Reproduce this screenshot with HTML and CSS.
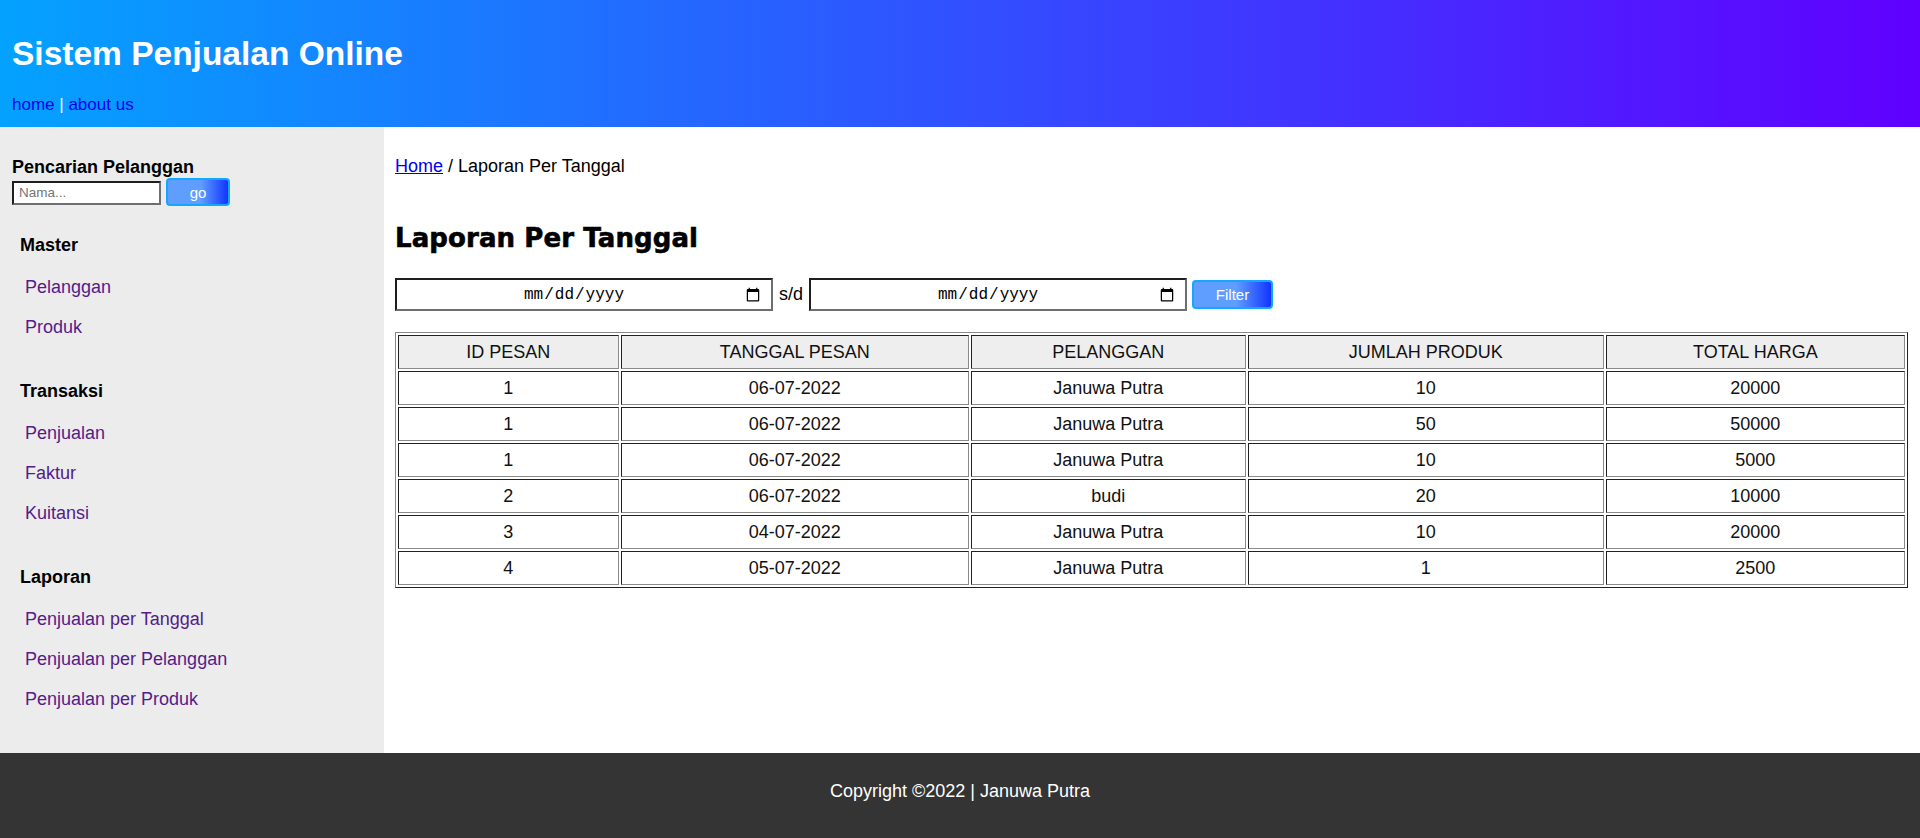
FILE: index.html
```html
<!DOCTYPE html>
<html lang="id">
<head>
<meta charset="utf-8">
<title>Laporan Per Tanggal</title>
<link rel="stylesheet" href="styles.css">
</head>
<body>
<header class="site-header">
  <h1 class="site-title">Sistem Penjualan Online</h1>
  <nav class="top-nav"><a href="#">home</a> | <a href="#">about us</a></nav>
</header>
<div class="layout">
  <aside class="sidebar">
    <div class="search-title">Pencarian Pelanggan</div>
    <form class="search-form">
      <input class="search-input" type="text" placeholder="Nama...">
      <button class="btn btn-go" type="button">go</button>
    </form>
    <section class="menu-section menu-first">
      <h3 class="menu-heading">Master</h3>
      <ul class="menu-list">
        <li><a href="#">Pelanggan</a></li>
        <li><a href="#">Produk</a></li>
      </ul>
    </section>
    <section class="menu-section">
      <h3 class="menu-heading">Transaksi</h3>
      <ul class="menu-list">
        <li><a href="#">Penjualan</a></li>
        <li><a href="#">Faktur</a></li>
        <li><a href="#">Kuitansi</a></li>
      </ul>
    </section>
    <section class="menu-section">
      <h3 class="menu-heading">Laporan</h3>
      <ul class="menu-list">
        <li><a href="#">Penjualan per Tanggal</a></li>
        <li><a href="#">Penjualan per Pelanggan</a></li>
        <li><a href="#">Penjualan per Produk</a></li>
      </ul>
    </section>
  </aside>
  <main class="content">
    <div class="breadcrumb"><a href="#">Home</a> / Laporan Per Tanggal</div>
    <h2 class="page-title">Laporan Per Tanggal</h2>
    <form class="filter-form">
      <input class="date-input" type="date">
      <span class="sd">s/d</span>
      <input class="date-input" type="date">
      <button class="btn btn-filter" type="button">Filter</button>
    </form>
    <table class="report">
      <thead>
        <tr><th>ID PESAN</th><th>TANGGAL PESAN</th><th>PELANGGAN</th><th>JUMLAH PRODUK</th><th>TOTAL HARGA</th></tr>
      </thead>
      <tbody>
        <tr><td>1</td><td>06-07-2022</td><td>Januwa Putra</td><td>10</td><td>20000</td></tr>
        <tr><td>1</td><td>06-07-2022</td><td>Januwa Putra</td><td>50</td><td>50000</td></tr>
        <tr><td>1</td><td>06-07-2022</td><td>Januwa Putra</td><td>10</td><td>5000</td></tr>
        <tr><td>2</td><td>06-07-2022</td><td>budi</td><td>20</td><td>10000</td></tr>
        <tr><td>3</td><td>04-07-2022</td><td>Januwa Putra</td><td>10</td><td>20000</td></tr>
        <tr><td>4</td><td>05-07-2022</td><td>Januwa Putra</td><td>1</td><td>2500</td></tr>
      </tbody>
    </table>
  </main>
</div>
<footer class="site-footer">Copyright ©2022 | Januwa Putra</footer>
</body>
</html>
```
FILE: styles.css
```css
* { box-sizing: border-box; }
html, body { margin: 0; padding: 0; }
body {
  font-family: "Liberation Sans", Arial, sans-serif;
  font-size: 18px;
  color: #000;
  background: #fff;
}

.site-header {
  height: 127px;
  padding: 34px 12px 0;
  background: linear-gradient(to right, #04a2ff 0%, #3a40ff 60%, #6000ff 100%);
  color: #fff;
}
.site-title {
  margin: 0;
  font-size: 33.5px;
  line-height: 39px;
  font-weight: bold;
}
.top-nav {
  margin-top: 22px;
  font-size: 17px;
  line-height: 20px;
  color: #fff;
}
.top-nav a { color: #0000ee; text-decoration: none; }

.layout {
  display: flex;
  align-items: stretch;
}

.sidebar {
  width: 384px;
  flex: 0 0 384px;
  background: #ececec;
  padding: 30px 0 34px 12px;
}
.search-title {
  font-weight: bold;
  line-height: 21px;
}
.search-form {
  display: flex;
  align-items: center;
  gap: 5px;
  margin: 0;
  height: 28px;
}
.search-input {
  width: 149px;
  height: 24px;
  margin-top: 1px;
  border-style: solid;
  border-width: 2px;
  border-color: #1e1e1e #6e6e6e #6e6e6e #1e1e1e;
  padding: 0 5px;
  font-family: "Liberation Sans", Arial, sans-serif;
  font-size: 13.5px;
  background: #fff;
}
.search-input::placeholder { color: #757575; }

.btn {
  border: 2px solid #12a8ff;
  border-radius: 4px;
  background: linear-gradient(to right, #5f9dff 0%, #5f9dff 55%, #1234ff 100%);
  color: #fff;
  font-family: "Liberation Sans", Arial, sans-serif;
  font-size: 15px;
  padding: 0;
}
.btn-go { width: 64px; height: 28px; }
.btn-filter { width: 81px; height: 29px; }

.menu-section { margin-top: 33.5px; }
.menu-first { margin-top: 28.5px; }
.menu-heading {
  margin: 0 0 0 8px;
  font-size: 18px;
  line-height: 21px;
  font-weight: bold;
}
.menu-list {
  list-style: none;
  margin: 11.5px 0 0;
  padding: 0 0 0 13px;
}
.menu-list li { line-height: 40px; height: 40px; }
.menu-list a { color: #551a8b; text-decoration: none; }

.content {
  flex: 1 1 auto;
  padding: 28.5px 12px 0 11px;
}
.breadcrumb { line-height: 21px; }
.breadcrumb a { color: #0000ee; text-decoration: underline; }

.page-title {
  margin: 46.5px 0 0;
  font-family: "DejaVu Sans", sans-serif;
  font-weight: bold;
  font-size: 26px;
  line-height: 30px;
  -webkit-text-stroke: 0.6px #000;
  letter-spacing: 0.1px;
}

.filter-form {
  display: flex;
  align-items: center;
  gap: 5px;
  margin: 25px 0 0;
  height: 33px;
}
.date-input {
  width: 378px;
  height: 33px;
  border-style: solid;
  border-width: 2px;
  border-color: #1e1e1e #6e6e6e #6e6e6e #1e1e1e;
  background: #fff;
  font-family: "Liberation Mono", monospace;
  font-size: 16px;
  text-align: center;
  padding: 0 8px;
}
.sd { padding: 0 1px; }

.report {
  width: 100%;
  margin-top: 21px;
  border-collapse: separate;
  border-spacing: 2px;
  border-style: solid;
  border-width: 1px;
  border-color: #8a8a8a #222 #222 #8a8a8a;
  font-size: 18px;
}
.report th, .report td {
  border-style: solid;
  border-width: 1px;
  border-color: #222 #8a8a8a #8a8a8a #222;
  padding: 6px 14px;
  line-height: 20px;
  text-align: center;
  font-weight: normal;
  color: #111;
}
.report th { background: #eee; }

.site-footer {
  height: 85px;
  padding-top: 28px;
  background: #343434;
  color: #fff;
  text-align: center;
  font-size: 18px;
  line-height: 21px;
}
```
